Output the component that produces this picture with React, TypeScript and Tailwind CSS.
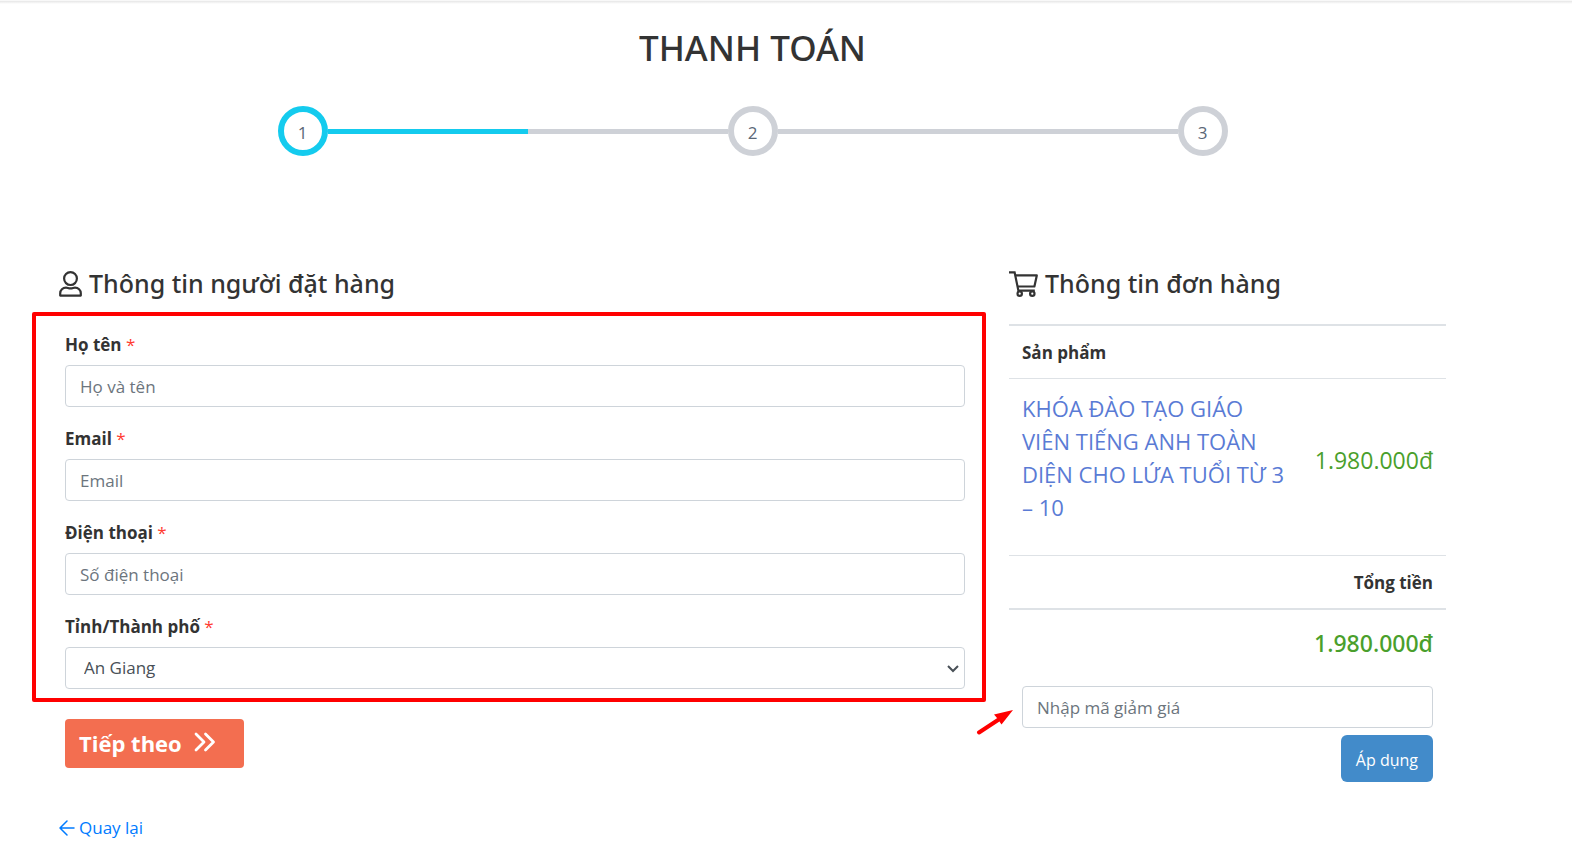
import { useState } from "react";
import { clsx } from "clsx";

const steps = [1, 2, 3];

const fields = [
  { id: "name", label: "Họ tên", placeholder: "Họ và tên", type: "text" },
  { id: "email", label: "Email", placeholder: "Email", type: "email" },
  { id: "phone", label: "Điện thoại", placeholder: "Số điện thoại", type: "tel" },
];

const provinces = ["An Giang", "Bà Rịa - Vũng Tàu", "Bắc Giang", "Cần Thơ", "Đà Nẵng", "Hà Nội", "Hồ Chí Minh"];

const controlClass =
  "h-[42px] w-full rounded border border-[#ced4da] bg-white text-[17px] text-[#495057] outline-none placeholder:text-[#6c757d] focus:border-[#80bdff]";

function UserIcon() {
  return (
    <svg viewBox="0 0 23 26" className="h-[26px] w-[23px]" fill="none" stroke="currentColor" strokeWidth="2.2" strokeLinejoin="round" aria-hidden="true">
      <circle cx="11.500" cy="7.600" r="6.400" />
      <path d="M1.200 24.600v-2.400c0-3.200 2.600-5.600 5.800-5.600 1.500 0 2.400.8 4.500.8s3-.8 4.500-.8c3.200 0 5.800 2.400 5.800 5.600v2.400z" />
    </svg>
  );
}

function CartIcon() {
  return (
    <svg viewBox="0 0 29 26" className="h-[26px] w-[29px]" fill="none" stroke="currentColor" strokeWidth="2.2" aria-hidden="true">
      <path d="M0 1.300h5.600l3.800 18.400h16.400" />
      <path d="M6.200 4.400h21.600l-2.400 11.100H8.600" strokeLinejoin="round" />
      <circle cx="10.700" cy="22.700" r="2.200" />
      <circle cx="23.300" cy="22.700" r="2.200" />
    </svg>
  );
}

function Required() {
  return <span className="font-normal text-[#ff3b30]"> *</span>;
}

function Stepper({ current }: { current: number }) {
  return (
    <ol className="mx-auto flex max-w-[950px] items-center">
      {steps.map((step) => (
        <li key={step} className={clsx("flex items-center", step > 1 && "flex-1")}>
          {step > 1 && (
            <div className="h-[5px] flex-1 bg-[#ced1d7]">
              {step === current + 1 && <div className="h-full w-1/2 bg-[#14cbee]" />}
            </div>
          )}
          <span
            className={clsx(
              "flex size-[50px] items-center justify-center rounded-full border-6 pt-1 text-[17px] text-[#5b6777]",
              step === current ? "border-[#14cbee]" : "border-[#ced1d7]"
            )}
          >
            {step}
          </span>
        </li>
      ))}
    </ol>
  );
}

function CustomerForm() {
  const [province, setProvince] = useState(provinces[0]);

  return (
    <form onSubmit={(e) => e.preventDefault()}>
      <div className="-mr-[21px] -ml-[27px] flex flex-col gap-[18px] rounded-xs border-4 border-[#ff0000] pt-[15px] pr-[17px] pb-[9px] pl-[29px]">
        {fields.map((field) => (
          <div key={field.id}>
            <label htmlFor={field.id} className="mb-[7px] block text-[17px] leading-[27px] font-bold">
              {field.label}
              <Required />
            </label>
            <input id={field.id} type={field.type} placeholder={field.placeholder} className={clsx(controlClass, "px-[14px]")} />
          </div>
        ))}
        <div>
          <label htmlFor="province" className="mb-[7px] block text-[17px] leading-[27px] font-bold">
            Tỉnh/Thành phố
            <Required />
          </label>
          <div className="relative">
            <select
              id="province"
              value={province}
              onChange={(e) => setProvince(e.target.value)}
              className={clsx(controlClass, "appearance-none px-[18px]")}
            >
              {provinces.map((name) => (
                <option key={name}>{name}</option>
              ))}
            </select>
            <svg viewBox="0 0 12 8" className="pointer-events-none absolute top-[18px] right-[6px] h-[8px] w-[12px]" fill="none" stroke="#495057" strokeWidth="2" aria-hidden="true">
              <path d="M1 1l5 5 5-5" />
            </svg>
          </div>
        </div>
      </div>

      <button type="submit" className="mt-[17px] ml-[6px] flex h-[49px] items-center rounded bg-[#f36e50] pr-[28px] pl-[14px] text-[22px] font-bold text-white">
        Tiếp theo
        <svg viewBox="0 0 22 20" className="mb-[4px] ml-[12px] h-[20px] w-[22px]" fill="none" stroke="currentColor" strokeWidth="2.800" strokeLinecap="round" strokeLinejoin="round" aria-hidden="true">
          <path d="M2 2l8 8-8 8M11.500 2l8 8-8 8" />
        </svg>
      </button>
    </form>
  );
}

function OrderSummary() {
  return (
    <>
      <table className="mt-[22px] w-full">
        <thead>
          <tr className="border-t-2 border-b border-[#dee2e6]">
            <th colSpan={2} className="h-[53px] px-[13px] pt-[2px] text-left text-[17px] font-bold">
              Sản phẩm
            </th>
          </tr>
        </thead>
        <tbody>
          <tr>
            <td className="h-[177px] w-[68%] pt-[13px] pr-[15px] pl-[13px] align-top text-[22px] leading-[33px]">
              <a href="#course" className="text-[#5a7bd5]">
                KHÓA ĐÀO TẠO GIÁO VIÊN TIẾNG ANH TOÀN DIỆN CHO LỨA TUỔI TỪ 3 – 10
              </a>
            </td>
            <td className="pr-[13px] pb-[13px] text-right text-[23px] text-[#4a9f2c]">1.980.000đ</td>
          </tr>
          <tr className="border-t border-b-2 border-[#dee2e6]">
            <th colSpan={2} className="h-[54px] px-[13px] pt-[2px] text-right text-[17px] font-bold">
              Tổng tiền
            </th>
          </tr>
          <tr>
            <td colSpan={2} className="h-[67px] px-[13px] text-right font-['Noto_Sans',sans-serif] text-[23px] font-medium text-[#4a9f2c]">
              1.980.000đ
            </td>
          </tr>
        </tbody>
      </table>
      <form className="relative mt-[10px] flex flex-col items-end gap-[7px] px-[13px]" onSubmit={(e) => e.preventDefault()}>
        <input aria-label="Nhập mã giảm giá" placeholder="Nhập mã giảm giá" className={clsx(controlClass, "px-[14px]")} />
        <button type="submit" className="h-[47px] rounded-md bg-[#428bca] px-[15px] pt-[3px] text-[16px] text-white">
          Áp dụng
        </button>
        <svg viewBox="0 0 37 26" className="absolute top-[23px] -left-[33px] h-[26px] w-[37px]" aria-hidden="true">
          <path d="M3 23.500L22 11" stroke="#ff0000" strokeWidth="4" strokeLinecap="round" />
          <path d="M37 1L18 5.500l3 3.500 4.500 6.500z" fill="#ff0000" />
        </svg>
      </form>
    </>
  );
}

export default function App() {
  return (
    <div className="min-h-screen bg-white font-['Open_Sans','Noto_Sans',sans-serif] text-[#333333]">
      <div className="h-[4px] border-t border-[#f8f8f8] bg-linear-to-b from-[#e6e6e6] to-white" />
      <main className="pr-[126px] pl-[59px]">
        <h1 className="mt-[19px] mb-[33px] text-center font-['Noto_Sans',sans-serif] text-[35px] leading-[50px] font-medium">THANH TOÁN</h1>
        <Stepper current={1} />

        <div className="mt-[109px] grid grid-cols-[906fr_437fr] gap-x-[44px]">
          <section>
            <h2 className="mb-[10px] flex h-[37px] items-center gap-[7px] font-['Noto_Sans',sans-serif] text-[25px] font-medium">
              <UserIcon />
              Thông tin người đặt hàng
            </h2>
            <CustomerForm />
          </section>
          <section>
            <h2 className="flex h-[37px] items-center gap-[7px] font-['Noto_Sans',sans-serif] text-[25px] font-medium">
              <CartIcon />
              Thông tin đơn hàng
            </h2>
            <OrderSummary />
          </section>
        </div>

        <a href="#cart" className="mt-[32px] inline-flex items-center gap-[4px] text-[17px] leading-[28px] text-[#007bff]">
          <svg viewBox="0 0 16 16" className="size-[16px]" fill="none" stroke="currentColor" strokeWidth="1.500" strokeLinecap="round" strokeLinejoin="round" aria-hidden="true">
            <path d="M15 8H1M8 1L1 8l7 7" />
          </svg>
          Quay lại
        </a>
      </main>
    </div>
  );
}
